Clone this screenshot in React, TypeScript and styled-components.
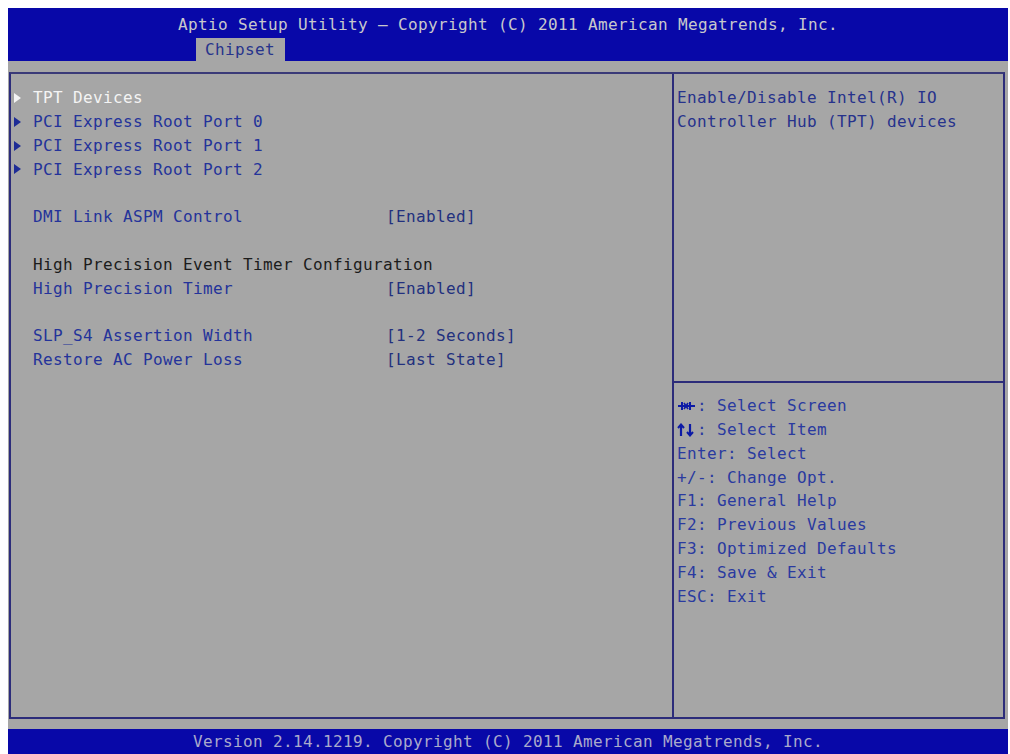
import React from "react";
import styled, { createGlobalStyle } from "styled-components";

const GlobalStyle = createGlobalStyle`
  html, body { margin: 0; padding: 0; background: #ffffff; }
  body { width: 1010px; height: 754px; overflow: hidden; }
`;

const BLUE = "#0808a8";
const GRAY = "#a6a6a6";
const LINE = "#2c2c7a";
const ROW = "23.85px";

const Screen = styled.div`
  margin: 8px 0 0 8px;
  width: 1000px;
  height: 746px;
  background: ${GRAY};
  display: flex;
  flex-direction: column;
  font-family: "DejaVu Sans Mono", "Liberation Mono", monospace;
  font-size: 16px;
  letter-spacing: 0.37px;
  overflow: hidden;
`;

const Header = styled.header`
  height: 53px;
  background: ${BLUE};
  display: flex;
  flex-direction: column;
  padding-top: 5px;
  box-sizing: border-box;
`;

const Title = styled.div`
  height: 24px;
  line-height: 24px;
  text-align: center;
  color: #c8c8cc;
  white-space: pre;
`;

const TabRow = styled.div`
  margin-top: 1px;
  padding-left: 188px;
  display: flex;
`;

const Tab = styled.div`
  height: 23px;
  line-height: 23px;
  padding: 0 10px 0 9px;
  background: ${GRAY};
  color: #27348c;
`;

const Body = styled.main`
  flex: 1;
  padding: 11px 3px 10px 1px;
  display: flex;
`;

const Box = styled.div`
  flex: 1;
  border: 2px solid ${LINE};
  border-top-color: #3a3a78;
  display: grid;
  grid-template-columns: 661px 1fr;
`;

const LeftPane = styled.section`
  padding-top: 12px;
  display: flex;
  flex-direction: column;
`;

const RightPane = styled.aside`
  border-left: 2px solid ${LINE};
  display: flex;
  flex-direction: column;
`;

const HelpTop = styled.div`
  height: 309px;
  padding: 12px 0 0 3px;
  box-sizing: border-box;
  border-bottom: 2px solid ${LINE};
`;

const HelpKeys = styled.div`
  padding: 11px 0 0 3px;
  display: flex;
  flex-direction: column;
`;

const Line = styled.div<{ $color?: string }>`
  height: ${ROW};
  line-height: ${ROW};
  display: flex;
  align-items: center;
  color: ${(p) => p.$color || "#26328c"};
  white-space: pre;
`;

const Row = styled.div<{ $color?: string }>`
  height: ${ROW};
  line-height: ${ROW};
  display: grid;
  grid-template-columns: 22px 353px auto;
  color: ${(p) => p.$color || "#24339a"};
  white-space: pre;
`;

const ArrowCell = styled.span`
  display: flex;
  align-items: center;
  padding-left: 3px;
`;

const Arrow = styled.span<{ $color: string }>`
  width: 0;
  height: 0;
  border-top: 5px solid transparent;
  border-bottom: 5px solid transparent;
  border-left: 7px solid ${(p) => p.$color};
`;

const Value = styled.span`
  color: #22307e;
`;

const KeyIcon = styled.svg`
  width: 20px;
  height: 14px;
  flex: none;
  color: #0c1aa6;
`;

const Footer = styled.footer`
  height: 25px;
  line-height: 25px;
  background: ${BLUE};
  color: #aaaacc;
  text-align: center;
  white-space: pre;
`;

type Item = {
  label?: string;
  value?: string;
  arrow?: boolean;
  selected?: boolean;
  heading?: boolean;
};

const items: Item[] = [
  { label: "TPT Devices", arrow: true, selected: true },
  { label: "PCI Express Root Port 0", arrow: true },
  { label: "PCI Express Root Port 1", arrow: true },
  { label: "PCI Express Root Port 2", arrow: true },
  {},
  { label: "DMI Link ASPM Control", value: "[Enabled]" },
  {},
  { label: "High Precision Event Timer Configuration", heading: true },
  { label: "High Precision Timer", value: "[Enabled]" },
  {},
  { label: "SLP_S4 Assertion Width", value: "[1-2 Seconds]" },
  { label: "Restore AC Power Loss", value: "[Last State]" },
];

const LeftRight = () => (
  <KeyIcon viewBox="0 0 20 14" aria-hidden>
    <g stroke="currentColor" strokeWidth="2" fill="none">
      <path d="M1 7H18" />
      <path d="M5 3V11" />
      <path d="M13 3V11" />
      <path d="M7 4L9 7L7 10" strokeWidth="1.6" />
      <path d="M11 4L9 7L11 10" strokeWidth="1.6" />
    </g>
  </KeyIcon>
);

const UpDown = () => (
  <KeyIcon viewBox="0 0 20 14" aria-hidden>
    <g stroke="currentColor" strokeWidth="2.2" fill="none">
      <path d="M4 2V13" />
      <path d="M1 5L4 1.5L7 5" strokeWidth="2" />
      <path d="M13 1V12" />
      <path d="M10 9L13 12.5L16 9" strokeWidth="2" />
    </g>
  </KeyIcon>
);

const keys: { icon?: React.ReactNode; text: string }[] = [
  { icon: <LeftRight />, text: ": Select Screen" },
  { icon: <UpDown />, text: ": Select Item" },
  { text: "Enter: Select" },
  { text: "+/-: Change Opt." },
  { text: "F1: General Help" },
  { text: "F2: Previous Values" },
  { text: "F3: Optimized Defaults" },
  { text: "F4: Save & Exit" },
  { text: "ESC: Exit" },
];

export default function App() {
  return (
    <>
      <GlobalStyle />
      <Screen>
        <Header>
          <Title>Aptio Setup Utility – Copyright (C) 2011 American Megatrends, Inc.</Title>
          <TabRow>
            <Tab>Chipset</Tab>
          </TabRow>
        </Header>
        <Body>
          <Box>
            <LeftPane>
              {items.map((it, i) => {
                const color = it.selected ? "#f4f4f4" : it.heading ? "#1c1c1c" : undefined;
                return (
                  <Row key={i} $color={color}>
                    <ArrowCell>
                      {it.arrow && <Arrow $color={it.selected ? "#f4f4f4" : "#1e2c96"} />}
                    </ArrowCell>
                    <span>{it.label || ""}</span>
                    {it.value ? <Value>{it.value}</Value> : <span />}
                  </Row>
                );
              })}
            </LeftPane>
            <RightPane>
              <HelpTop>
                <Line>Enable/Disable Intel(R) IO</Line>
                <Line>Controller Hub (TPT) devices</Line>
              </HelpTop>
              <HelpKeys>
                {keys.map((k, i) => (
                  <Line key={i} $color="#2a3aa0">
                    {k.icon}
                    {k.text}
                  </Line>
                ))}
              </HelpKeys>
            </RightPane>
          </Box>
        </Body>
        <Footer>Version 2.14.1219. Copyright (C) 2011 American Megatrends, Inc.</Footer>
      </Screen>
    </>
  );
}
